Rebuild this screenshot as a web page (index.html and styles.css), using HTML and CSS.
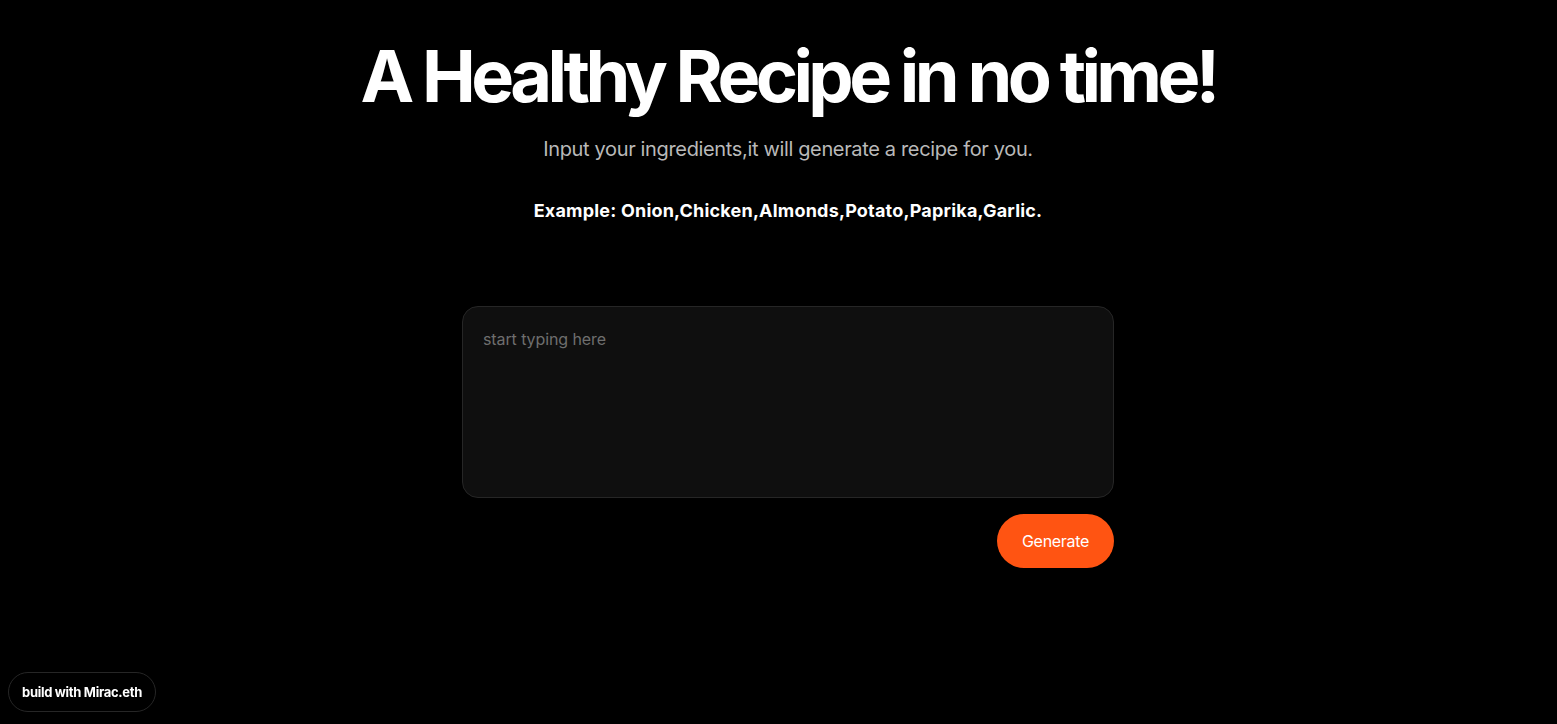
FILE: index.html
```html
<!DOCTYPE html>
<html lang="en">
<head>
<meta charset="utf-8">
<title>A Healthy Recipe in no time!</title>
<link rel="stylesheet" href="styles.css">
</head>
<body>
<main class="page">
  <h1 class="title">A Healthy Recipe in no time!</h1>
  <p class="subtitle">Input your ingredients,it will generate a recipe for you.</p>
  <p class="example">Example: Onion,Chicken,Almonds,Potato,Paprika,Garlic.</p>
  <form class="form">
    <textarea class="input" placeholder="start typing here"></textarea>
    <div class="actions">
      <button type="button" class="btn">Generate</button>
    </div>
  </form>
</main>
<a class="badge">build with Mirac.eth</a>
</body>
</html>
```
FILE: styles.css
```css
* { box-sizing: border-box; }
html, body { margin: 0; background: #000; }
body {
  font-family: Inter, "Noto Sans", sans-serif;
  color: #fff;
  height: 724px;
  overflow: hidden;
}
.page {
  display: flex;
  flex-direction: column;
  align-items: center;
  padding-top: 34px;
  padding-left: 19px;
}
.title {
  margin: 0;
  font-size: 72px;
  font-weight: 700;
  letter-spacing: -4.6px;
  line-height: 84px;
}
.subtitle {
  margin: 18px 0 0;
  font-size: 20px;
  font-weight: 400;
  color: #b9b9b9;
  letter-spacing: -0.35px;
  line-height: 26px;
}
.example {
  margin: 37px 0 0;
  font-size: 18px;
  font-weight: 700;
  letter-spacing: 0.2px;
  line-height: 24px;
}
.form {
  margin-top: 83px;
  width: 652px;
  display: flex;
  flex-direction: column;
}
.input {
  width: 652px;
  height: 192px;
  background: #0f0f0f;
  border: 1px solid #262626;
  border-radius: 16px;
  padding: 22px 20px;
  color: #ddd;
  font-family: Inter, "Noto Sans", sans-serif;
  font-size: 16px;
  letter-spacing: -0.1px;
  resize: none;
  outline: none;
}
.input::placeholder { color: #6e6e6e; }
.actions {
  display: flex;
  justify-content: flex-end;
  margin-top: 16px;
}
.btn {
  width: 117px;
  height: 54px;
  border: none;
  border-radius: 27px;
  background: #ff5412;
  color: #fff;
  font-family: Inter, "Noto Sans", sans-serif;
  font-size: 16px;
  letter-spacing: -0.3px;
  cursor: pointer;
}
.badge {
  position: fixed;
  left: 8px;
  bottom: 12px;
  height: 40px;
  padding: 0 13px;
  display: flex;
  align-items: center;
  border: 1px solid #262626;
  border-radius: 20px;
  font-size: 13px;
  font-weight: 700;
  letter-spacing: -0.3px;
  color: #fff;
}
```
